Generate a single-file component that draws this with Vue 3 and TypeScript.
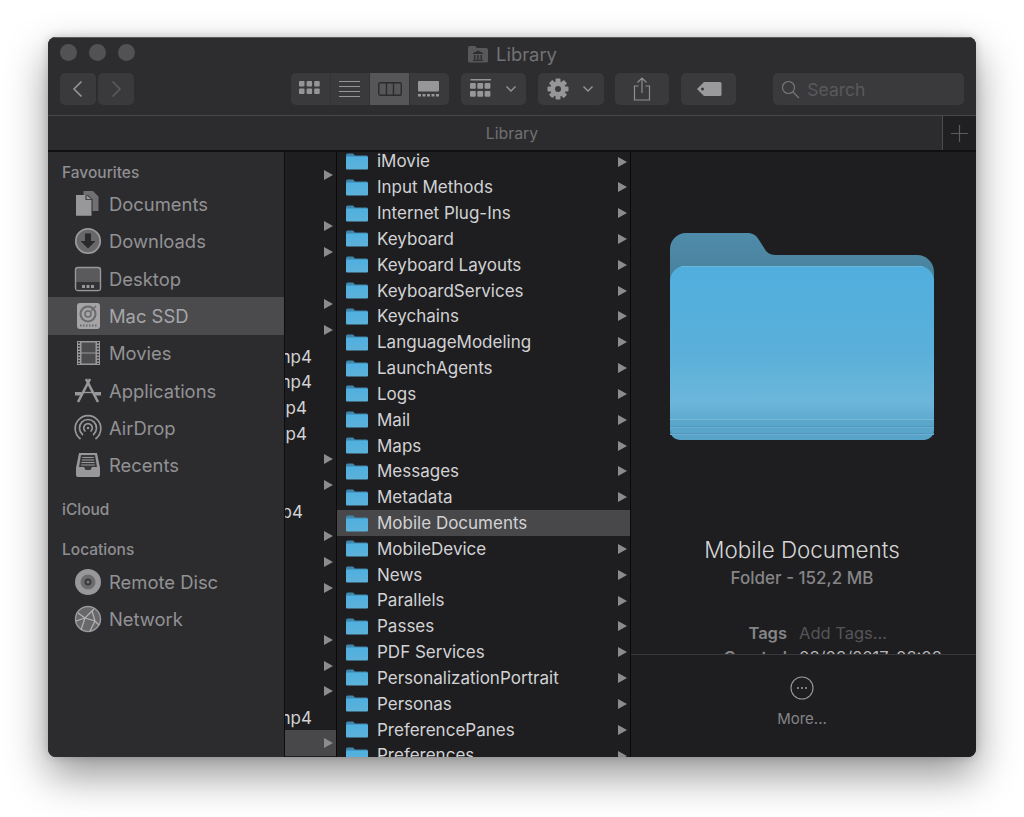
<template>
  <div class="page">
    <div class="window">
      <header class="toolbar">
        <div class="title-row">
          <div class="lights"><span></span><span></span><span></span></div>
          <div class="title">
            <svg width="22" height="18" viewBox="0 0 22 18">
              <path d="M1 3a2 2 0 0 1 2-2h5l2 2h9a2 2 0 0 1 2 2v11a1.500 1.500 0 0 1-1.500 1.500h-17A1.500 1.500 0 0 1 1 16z" fill="#58585a" />
              <path d="M11 5.500l5 2.500v1H6V8zM7 10h1.500v4H7zM10.200 10h1.600v4h-1.600zM13.500 10H15v4h-1.500zM6 14.500h10V16H6z" fill="#2f2f31" />
            </svg>
            <span>Library</span>
          </div>
        </div>
        <div class="tools">
          <div class="nav">
            <button class="tool nav-btn">
              <svg width="14" height="18" viewBox="0 0 14 18"><path d="M10.500 1.500L3 9l7.500 7.500" class="line" /></svg>
            </button>
            <button class="tool nav-btn">
              <svg width="14" height="18" viewBox="0 0 14 18"><path d="M3.500 1.500L11 9l-7.500 7.500" class="line dim" /></svg>
            </button>
          </div>
          <div class="views">
            <button class="view">
              <svg width="22" height="16" viewBox="0 0 22 16" class="glyph">
                <rect v-for="c in gridCells" :key="c.x + '-' + c.y" :x="c.x" :y="c.y" width="5.500" height="5.500" rx="1" />
              </svg>
            </button>
            <button class="view">
              <svg width="22" height="16" viewBox="0 0 22 16" class="glyph">
                <rect v-for="y in [0, 5, 10, 15]" :key="y" x="0" :y="y" width="21" height="1" />
              </svg>
            </button>
            <button class="view active">
              <svg width="24" height="16" viewBox="0 0 24 16">
                <rect x="0.750" y="1.750" width="22.500" height="12.500" rx="1.500" fill="none" stroke="#2b2b2d" stroke-width="1.400" />
                <path d="M8.500 2v12M15.500 2v12" stroke="#2b2b2d" stroke-width="1.400" />
              </svg>
            </button>
            <button class="view">
              <svg width="22" height="16" viewBox="0 0 22 16" class="glyph">
                <rect x="0" y="0" width="21" height="10.500" rx="1" />
                <rect v-for="x in [0, 4.500, 9, 13.500, 18]" :key="x" :x="x" y="13" width="3" height="2.500" />
              </svg>
            </button>
          </div>
          <button class="tool arrange">
            <svg width="22" height="20" viewBox="0 0 22 20" class="glyph">
              <rect x="0.500" y="0" width="20.500" height="1.500" />
              <rect v-for="c in arrangeCells" :key="c.x + '-' + c.y" :x="c.x" :y="c.y" width="5.800" height="5.800" rx="1" />
            </svg>
            <svg width="12" height="8" viewBox="0 0 12 8"><path d="M1.500 1.500L6 6l4.500-4.500" class="chev" /></svg>
          </button>
          <button class="tool action">
            <svg width="22" height="22" viewBox="0 0 22 22" class="glyph">
              <rect v-for="a in gearTeeth" :key="a" x="8.500" y="0.500" width="5" height="21" rx="1" :transform="`rotate(${a} 11 11)`" />
              <circle cx="11" cy="11" r="7.500" />
              <circle cx="11" cy="11" r="3" fill="#3a3a3d" />
            </svg>
            <svg width="12" height="8" viewBox="0 0 12 8"><path d="M1.500 1.500L6 6l4.500-4.500" class="chev" /></svg>
          </button>
          <button class="tool share">
            <svg width="18" height="24" viewBox="0 0 18 24">
              <path d="M5.500 9H1.500v14h15V9h-4M9 16V1M4.500 5.500L9 1l4.500 4.500" fill="none" stroke="#8f8f91" stroke-width="1.200" />
            </svg>
          </button>
          <button class="tool tag">
            <svg width="26" height="16" viewBox="0 0 26 16">
              <path d="M8 1h16a1.500 1.500 0 0 1 1.500 1.500v11A1.500 1.500 0 0 1 24 15H8L1 8z" fill="#9a9a9c" />
              <circle cx="6.500" cy="8" r="1.500" fill="#3a3a3d" />
            </svg>
          </button>
          <label class="search">
            <svg width="19" height="19" viewBox="0 0 19 19">
              <circle cx="7.500" cy="7.500" r="6" fill="none" stroke="#77777a" stroke-width="1.200" />
              <path d="M12 12l6 6" stroke="#77777a" stroke-width="1.200" />
            </svg>
            <span>Search</span>
          </label>
        </div>
      </header>

      <div class="tabbar">
        <span class="tab-label">Library</span>
        <div class="tab-add">
          <svg width="17" height="17" viewBox="0 0 17 17"><path d="M8.500 0v17M0 8.500h17" stroke="#5c5c5e" stroke-width="1.200" /></svg>
        </div>
      </div>

      <div class="content">
        <aside class="sidebar">
          <template v-for="section in sidebar" :key="section.title">
            <div class="side-title" :class="section.cls">{{ section.title }}</div>
            <div v-for="item in section.items" :key="item.name" class="side-item" :class="{ selected: item.name === 'Mac SSD' }">
              <svg width="28" height="28" viewBox="0 0 28 28" class="side-icon">
                <template v-if="item.icon === 'documents'">
                  <path d="M9.500 1h9.500l5.500 5.500V21h-6V9.500L14 5H9.500z" fill="#707072" />
                  <path d="M2 5h9.500v5h6v15.700H2z" fill="#98989a" />
                  <path d="M12.500 5l5 4.200h-5z" fill="#98989a" />
                </template>
                <template v-else-if="item.icon === 'downloads'">
                  <circle cx="14" cy="14" r="12.200" fill="#68686a" stroke="#98989a" stroke-width="1.800" />
                  <path d="M11 6.500h6v7.500h4.500L14 21.500 6.500 14H11z" fill="#2a2a2c" />
                </template>
                <template v-else-if="item.icon === 'desktop'">
                  <rect x="1.500" y="2.500" width="25" height="23" rx="2.500" fill="#5a5a5c" stroke="#98989a" stroke-width="1.400" />
                  <rect x="2.500" y="17" width="23" height="7.800" fill="#333335" />
                  <rect v-for="x in [8, 12.500, 17]" :key="x" :x="x" y="20" width="3" height="3" fill="#98989a" />
                </template>
                <template v-else-if="item.icon === 'disk'">
                  <rect x="3" y="1" width="23" height="26" rx="3" fill="#a4a4a6" />
                  <circle cx="14" cy="12" r="7.500" fill="none" stroke="#6a6a6c" stroke-width="2" />
                  <circle cx="14" cy="12" r="3" fill="none" stroke="#6a6a6c" stroke-width="1.500" />
                  <path d="M17 9l5-5" stroke="#6a6a6c" stroke-width="1.500" />
                  <path d="M6 23.500h17" stroke="#6a6a6c" stroke-width="2" stroke-dasharray="1.500 1.500" />
                </template>
                <template v-else-if="item.icon === 'movies'">
                  <rect x="3" y="2" width="23" height="24" fill="#98989a" />
                  <rect x="7.500" y="3.500" width="14" height="10" fill="#4c4c4e" />
                  <rect x="7.500" y="14.500" width="14" height="10" fill="#4c4c4e" />
                  <path d="M5 3v22M24 3v22" stroke="#3a3a3c" stroke-width="2" stroke-dasharray="1.500 1.500" />
                </template>
                <template v-else-if="item.icon === 'apps'">
                  <path d="M12 2l12 23M16 2L4 25" fill="none" stroke="#98989a" stroke-width="2.600" />
                  <path d="M1 15h7l-1.500 3.500H1zM27 15h-7l1.500 3.500H27z" fill="#98989a" />
                  <path d="M9 15.500h10" stroke="#98989a" stroke-width="1.400" />
                </template>
                <template v-else-if="item.icon === 'airdrop'">
                  <g fill="none" stroke="#98989a" stroke-linecap="round">
                    <path d="M6 24.500a12.800 12.800 0 1 1 16 0" stroke-width="1.700" />
                    <path d="M8.500 20.500a8.500 8.500 0 1 1 11 0" stroke-width="1.700" />
                    <path d="M11 17a4.300 4.300 0 1 1 6 0" stroke-width="1.700" />
                  </g>
                  <circle cx="14" cy="14" r="1.300" fill="#98989a" />
                </template>
                <template v-else-if="item.icon === 'recents'">
                  <path d="M5 2h18l3 15v7a2 2 0 0 1-2 2H4a2 2 0 0 1-2-2v-7z" fill="#98989a" />
                  <path d="M7 4h14l2 12h-5l-1.500 3h-5L10 16H5z" fill="#3a3a3c" />
                  <path d="M8.500 6.500h11M8 9h12M7.500 11.500h13M7.200 14h13.600" stroke="#98989a" stroke-width="1.200" />
                </template>
                <template v-else-if="item.icon === 'disc'">
                  <circle cx="14" cy="14" r="13" fill="#98989a" />
                  <circle cx="14" cy="14" r="7.500" fill="#6c6c6e" />
                  <circle cx="14" cy="14" r="3.500" fill="#38383a" />
                  <circle cx="14" cy="14" r="1.500" fill="#7a7a7c" />
                </template>
                <template v-else>
                  <circle cx="14" cy="14" r="12.500" fill="#68686a" stroke="#98989a" stroke-width="1.500" />
                  <path d="M4 8l7 5 9-9M11 13l-4 12M11 13l10 3 4 4M21 16l-3-10M21 16l-5 10M2 16l9-3" fill="none" stroke="#b4b4b6" stroke-width="1.200" />
                </template>
              </svg>
              <span>{{ item.name }}</span>
            </div>
          </template>
        </aside>

        <section class="column first">
          <div class="rows">
            <div v-for="(row, i) in firstColumn" :key="i" class="row-first" :class="{ selected: row.selected }">
              <span v-if="row.name" class="clipped" :style="{ paddingRight: row.end + 'px' }">{{ row.name }}</span>
              <i v-if="row.folder" class="arrow"></i>
            </div>
          </div>
        </section>

        <section class="column second">
          <div class="rows">
            <div v-for="name in folders" :key="name" class="row" :class="{ selected: name === 'Mobile Documents' }">
              <svg width="22" height="17" viewBox="0 0 22 17" class="mini">
                <path d="M0 2a1.500 1.500 0 0 1 1.500-1.500h5c.8 0 1.200.3 1.600.9l.8 1.100H20.500A1.500 1.500 0 0 1 22 4v4H0z" fill="#3f86ab" />
                <path d="M0 4.800a1.200 1.200 0 0 1 1.200-1.200h19.600A1.200 1.200 0 0 1 22 4.800v10.700a1 1 0 0 1-1 1H1a1 1 0 0 1-1-1z" fill="url(#mini-blue)" />
                <defs>
                  <linearGradient id="mini-blue" x1="0" y1="0" x2="0" y2="1">
                    <stop offset="0" stop-color="#4fb0e0" />
                    <stop offset="1" stop-color="#5db1d8" />
                  </linearGradient>
                </defs>
              </svg>
              <span class="name">{{ name }}</span>
              <i v-if="name !== 'Mobile Documents'" class="arrow"></i>
            </div>
          </div>
        </section>

        <section class="preview">
          <div class="info">
            <svg width="266" height="209" viewBox="0 0 266 209" class="big-folder">
              <defs>
                <linearGradient id="back" x1="0" y1="0" x2="0" y2="1">
                  <stop offset="0" stop-color="#4f8cab" />
                  <stop offset="1" stop-color="#44788f" />
                </linearGradient>
                <linearGradient id="front" x1="0" y1="0" x2="0" y2="1">
                  <stop offset="0" stop-color="#51aedd" />
                  <stop offset="0.500" stop-color="#5ab0da" />
                  <stop offset="0.780" stop-color="#6cb6da" />
                  <stop offset="0.880" stop-color="#5fabd0" />
                  <stop offset="1" stop-color="#5aa6cc" />
                </linearGradient>
              </defs>
              <path d="M1 17A16 16 0 0 1 17 1h61c6 0 9 2 12 7l7 11c3 3 6 4 10 4h141a17 17 0 0 1 17 17v40H1z" fill="url(#back)" />
              <path d="M1 49a15 15 0 0 1 15-15h234a15 15 0 0 1 15 15v149a10 10 0 0 1-10 10H11a10 10 0 0 1-10-10z" fill="url(#front)" />
              <path d="M12 34.500h242" stroke="#68b6de" stroke-width="1" />
              <path d="M1 188h264v10a10 10 0 0 1-10 10H11a10 10 0 0 1-10-10z" fill="#569fc4" opacity="0.450" />
              <path d="M1 187.500h264" stroke="#76b8d8" stroke-width="1" />
              <path d="M1 194.500h264M1 201.500h264" stroke="#5198bc" stroke-width="1" />
              <path d="M1 195.500h264M1 202.500h264" stroke="#6aafd1" stroke-width="1" />
            </svg>
            <h2 class="preview-name">Mobile Documents</h2>
            <p class="preview-kind">Folder - 152,2 MB</p>
            <dl class="meta">
              <dt>Tags</dt><dd class="dim-text">Add Tags...</dd>
              <dt>Created</dt><dd>08/08/2017, 08:08</dd>
            </dl>
          </div>
          <div class="more">
            <svg width="24" height="24" viewBox="0 0 24 24">
              <circle cx="12" cy="12" r="11" fill="none" stroke="#9a9a9c" stroke-width="1.100" />
              <circle v-for="x in [8, 12, 16]" :key="x" :cx="x" cy="12" r="1" fill="#9a9a9c" />
            </svg>
            <span>More...</span>
          </div>
        </section>
      </div>
    </div>
  </div>
</template>

<script setup lang="ts">
interface SideItem {
  name: string;
  icon: string;
}

interface SideSection {
  title: string;
  cls: string;
  items: SideItem[];
}

interface FirstRow {
  name?: string;
  end?: number;
  folder?: boolean;
  selected?: boolean;
}

const gridCells = [0, 1].flatMap((r) => [0, 1, 2].map((c) => ({ x: c * 7.6, y: r * 7.6 })));
const arrangeCells = [0, 1].flatMap((r) => [0, 1, 2].map((c) => ({ x: c * 7.3, y: 4 + r * 8 })));
const gearTeeth = [0, 45, 90, 135];

const sidebar: SideSection[] = [
  {
    title: "Favourites",
    cls: "fav",
    items: [
      { name: "Documents", icon: "documents" },
      { name: "Downloads", icon: "downloads" },
      { name: "Desktop", icon: "desktop" },
      { name: "Mac SSD", icon: "disk" },
      { name: "Movies", icon: "movies" },
      { name: "Applications", icon: "apps" },
      { name: "AirDrop", icon: "airdrop" },
      { name: "Recents", icon: "recents" },
    ],
  },
  { title: "iCloud", cls: "cloud", items: [] },
  {
    title: "Locations",
    cls: "loc",
    items: [
      { name: "Remote Disc", icon: "disc" },
      { name: "Network", icon: "network" },
    ],
  },
];

const firstColumn: FirstRow[] = [
  {},
  { folder: true },
  {},
  { folder: true },
  { folder: true },
  {},
  { folder: true },
  { folder: true },
  { name: "Intro.mp4", end: 24 },
  { name: "Demo.mp4", end: 24 },
  { name: "Clip.mp4", end: 29 },
  { name: "Take.mp4", end: 29 },
  { folder: true },
  { folder: true },
  { name: "Show.mp4", end: 33 },
  { folder: true },
  { folder: true },
  { folder: true },
  {},
  { folder: true },
  { folder: true },
  { folder: true },
  { name: "Team.mp4", end: 24 },
  { folder: true, selected: true },
];

const folders = [
  "iMovie",
  "Input Methods",
  "Internet Plug-Ins",
  "Keyboard",
  "Keyboard Layouts",
  "KeyboardServices",
  "Keychains",
  "LanguageModeling",
  "LaunchAgents",
  "Logs",
  "Mail",
  "Maps",
  "Messages",
  "Metadata",
  "Mobile Documents",
  "MobileDevice",
  "News",
  "Parallels",
  "Passes",
  "PDF Services",
  "PersonalizationPortrait",
  "Personas",
  "PreferencePanes",
  "Preferences",
];
</script>

<style>
body {
  background: #fff;
}
</style>

<style scoped>
.page {
  width: 1024px;
  height: 817px;
  padding: 37px 48px 60px;
  box-sizing: border-box;
  overflow: hidden;
  font-family: Inter, "Liberation Sans", sans-serif;
}
.window {
  width: 928px;
  height: 720px;
  border-radius: 8px;
  overflow: hidden;
  display: flex;
  flex-direction: column;
  background: #2d2d30;
  box-shadow: 0 18px 42px rgba(0, 0, 0, 0.42), 0 0 10px rgba(0, 0, 0, 0.18);
}
.toolbar {
  height: 79px;
  flex: none;
  box-sizing: border-box;
  border-top: 1px solid #5c5c5e;
  border-bottom: 1px solid #47474a;
  padding: 0 12px;
  background: #2d2d30;
}
.title-row {
  height: 35px;
  padding-bottom: 4px;
  box-sizing: border-box;
  position: relative;
  display: flex;
  align-items: center;
  justify-content: center;
}
.lights {
  position: absolute;
  left: 0;
  top: 6px;
  display: flex;
  gap: 12px;
}
.lights span {
  width: 17px;
  height: 17px;
  border-radius: 50%;
  background: #525254;
}
.title {
  display: flex;
  align-items: center;
  gap: 7px;
  color: #727274;
  font-size: 18.400px;
}
.tools {
  display: flex;
  align-items: stretch;
  height: 32px;
}
button {
  border: none;
  padding: 0;
  font: inherit;
  background: none;
  display: flex;
  align-items: center;
  justify-content: center;
}
.tool {
  background: #3a3a3d;
  border-radius: 5px;
}
.nav {
  display: flex;
  gap: 2px;
  margin-right: 157px;
}
.nav-btn {
  width: 36px;
}
.line {
  fill: none;
  stroke: #98989a;
  stroke-width: 1.500;
}
.line.dim {
  stroke: #5c5c5e;
}
.views {
  display: flex;
  width: 158px;
  border-radius: 5px;
  overflow: hidden;
  background: #3a3a3d;
  margin-right: 12px;
}
.view {
  flex: 1;
}
.view + .view {
  border-left: 1px solid #333336;
}
.view.active {
  background: #565658;
}
.glyph {
  fill: #969698;
}
.arrange {
  width: 65px;
  gap: 13px;
  margin-right: 12px;
}
.action {
  width: 66px;
  gap: 13px;
  margin-right: 11px;
}
.chev {
  fill: none;
  stroke: #969698;
  stroke-width: 1.400;
}
.share,
.tag {
  width: 55px;
}
.share {
  margin-right: 12px;
}
.tag {
  margin-right: 37px;
}
.search {
  width: 191px;
  display: flex;
  align-items: center;
  gap: 7px;
  padding-left: 8px;
  box-sizing: border-box;
  background: #3a3a3d;
  border-radius: 5px;
  color: #59595c;
  font-size: 17.500px;
}
.tabbar {
  height: 36px;
  flex: none;
  display: flex;
  align-items: center;
  justify-content: center;
  position: relative;
  box-sizing: border-box;
  border-bottom: 2px solid #101012;
  background: #2c2c2f;
  color: #707072;
  font-size: 15.800px;
}
.tab-add {
  position: absolute;
  right: 0;
  top: 0;
  bottom: 0;
  width: 33px;
  display: flex;
  align-items: center;
  justify-content: center;
  background: #202022;
  border-left: 1.500px solid #4d4d4f;
}
.content {
  flex: 1;
  min-height: 0;
  display: flex;
}
.sidebar {
  width: 237px;
  flex: none;
  box-sizing: border-box;
  padding-top: 12px;
  background: #2c2c2f;
  border-right: 1px solid #0d0d0f;
}
.side-title {
  height: 18px;
  line-height: 18px;
  padding-left: 14px;
  color: #8f8f91;
  font-size: 15.500px;
  font-weight: 500;
}
.fav {
  margin-bottom: 3.500px;
}
.cloud {
  margin-top: 17.500px;
}
.loc {
  margin-top: 22px;
  margin-bottom: 4px;
}
.side-item {
  height: 37.300px;
  display: flex;
  align-items: center;
  padding-left: 26px;
  gap: 7px;
  color: #929294;
  font-size: 18.400px;
}
.side-item.selected {
  background: #4b4b4e;
  color: #a6a6a8;
}
.side-icon {
  flex: none;
}
.column {
  flex: none;
  height: 100%;
  overflow: hidden;
  box-sizing: border-box;
  background: #1e1e20;
  border-right: 1px solid #0a0a0c;
  color: #d2d2d4;
  font-size: 17px;
}
.first {
  width: 52px;
}
.second {
  width: 294px;
}
.first .rows {
  margin-top: -16px;
}
.second .rows {
  margin-top: -3.500px;
}
.row,
.row-first {
  height: 25.830px;
  display: flex;
  align-items: center;
  position: relative;
  box-sizing: border-box;
}
.row {
  padding-left: 9px;
}
.row.selected,
.row-first.selected {
  background: #48484a;
}
.mini {
  flex: none;
  margin-right: 9px;
}
.name {
  flex: 1;
  white-space: nowrap;
}
.clipped {
  position: absolute;
  right: 0;
  margin-top: 2px;
  white-space: nowrap;
}
.arrow {
  position: absolute;
  right: 3px;
  top: 8px;
  width: 0;
  height: 0;
  border-left: 9px solid #8c8c8e;
  border-top: 5px solid transparent;
  border-bottom: 5px solid transparent;
}
.preview {
  flex: 1;
  min-width: 0;
  display: flex;
  flex-direction: column;
  background: #1e1e20;
}
.info {
  flex: 1;
  min-height: 0;
  overflow: hidden;
  display: flex;
  flex-direction: column;
  align-items: center;
  padding: 80px 3px 0 0;
}
.big-folder {
  flex: none;
}
.preview-name {
  margin: 96px 0 0;
  font-size: 22.400px;
  font-weight: 300;
  line-height: 26px;
  color: #d6d6d8;
}
.preview-kind {
  margin: 5px 0 0;
  font-size: 17px;
  font-weight: 500;
  line-height: 20px;
  color: #858587;
}
.meta {
  margin: 35px 0 0;
  width: 100%;
  display: grid;
  grid-template-columns: 156px 1fr;
  column-gap: 12px;
  row-gap: 4px;
  font-size: 16.500px;
  line-height: 20px;
}
.meta dt {
  text-align: right;
  font-weight: 600;
  color: #858587;
}
.meta dd {
  margin: 0;
  color: #b8b8ba;
}
.meta .dim-text {
  color: #555557;
}
.more {
  flex: none;
  height: 103px;
  box-sizing: border-box;
  border-top: 1px solid #39393b;
  display: flex;
  flex-direction: column;
  align-items: center;
  padding: 21px 3px 0 0;
  gap: 9px;
  color: #858587;
  font-size: 15px;
}
</style>
